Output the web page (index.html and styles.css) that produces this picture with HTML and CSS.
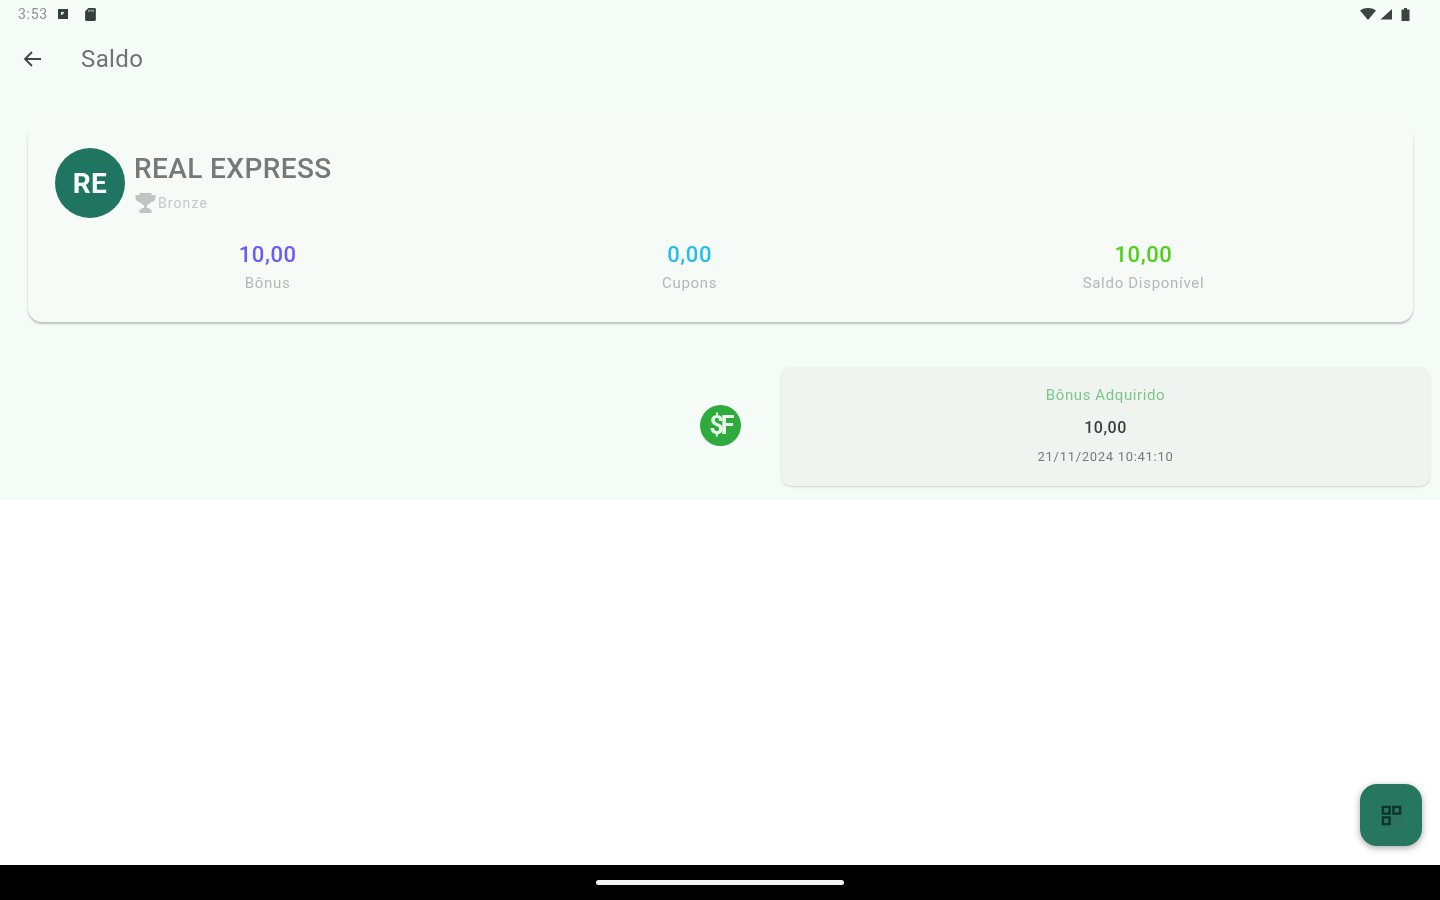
FILE: index.html
```html
<!DOCTYPE html>
<html lang="pt">
<head>
    <meta charset="UTF-8">
    <meta name="viewport" content="width=device-width, initial-scale=1.0">
    <title>Saldo</title>
    <link rel="stylesheet" href="styles.css">
</head>
<body>

<div class="screen">
    <div class="top-area">
        <!-- Status bar -->
        <div class="status-bar">
            <div class="status-left">
                <span class="clock">3:53</span>
                <svg class="status-icon" width="12" height="12" viewBox="0 0 12 12"><path fill="#33403b" d="M1 1h10v10H1z"/><path fill="#e8eeea" d="M4 4h3v1.500H5.500V7H4z"/></svg>
                <svg class="status-icon sd" width="13" height="15" viewBox="0 0 12 14"><path fill="#33403b" d="M4 1h6a1 1 0 0 1 1 1v10a1 1 0 0 1-1 1H2a1 1 0 0 1-1-1V4z"/><path fill="#c9d2cd" d="M4 2.500h1v2H4zM6 2.500h1v2H6zM8 2.500h1v2H8z"/></svg>
            </div>
            <div class="status-right">
                <svg width="16" height="12" viewBox="0 0 16 12"><path fill="#3a4540" d="M0 2.500C4.500-.8 11.500-.8 16 2.500L8 12z"/></svg>
                <svg class="signal" width="14" height="12" viewBox="0 0 13 12"><path fill="#3a4540" d="M12.500 1v10.500H1z"/></svg>
                <svg class="battery" width="9" height="13" viewBox="0 0 8 13"><path fill="#3a4540" d="M2.500 0h3v1.500H8V13H0V1.500h2.500z"/></svg>
            </div>
        </div>

        <!-- Toolbar -->
        <div class="toolbar">
            <svg class="back-icon" width="20" height="18" viewBox="0 0 20 18"><path fill="none" stroke="#3d4743" stroke-width="1.800" d="M19 9H3M10 2L3 9l7 7"/></svg>
            <span class="toolbar-title">Saldo</span>
        </div>

        <!-- Balance card -->
        <div class="card">
            <div class="card-head">
                <div class="avatar">RE</div>
                <div class="company">
                    <div class="company-name">REAL EXPRESS</div>
                    <div class="tier">
                        <svg width="23" height="22" viewBox="0 0 22 22"><path fill="#bfc6c2" d="M5 1h12v2h4v2.500c0 2.800-1.800 4.500-4.700 4.800-.8 1.500-2.100 2.500-3.800 2.900V16h2.500v1.500h2V21H5v-3.500h2V16h2.500v-2.800c-1.700-.4-3-1.400-3.800-2.900C2.800 10 1 8.300 1 5.500V3h4z"/></svg>
                        <span class="tier-name">Bronze</span>
                    </div>
                </div>
            </div>
            <div class="stats">
                <div class="stat">
                    <div class="stat-value bonus">10,00</div>
                    <div class="stat-label">Bônus</div>
                </div>
                <div class="stat">
                    <div class="stat-value cupons">0,00</div>
                    <div class="stat-label">Cupons</div>
                </div>
                <div class="stat">
                    <div class="stat-value saldo">10,00</div>
                    <div class="stat-label">Saldo Disponível</div>
                </div>
            </div>
        </div>

        <!-- Timeline entry -->
        <div class="entry">
            <div class="entry-side">
                <div class="entry-badge">$F</div>
            </div>
            <div class="entry-box">
                <div class="entry-title">Bônus Adquirido</div>
                <div class="entry-value">10,00</div>
                <div class="entry-date">21/11/2024 10:41:10</div>
            </div>
        </div>
    </div>

    <div class="white-area"></div>

    <div class="nav-bar">
        <div class="home-pill"></div>
    </div>

    <div class="fab">
        <svg width="21" height="21" viewBox="0 0 22 22">
            <path fill="none" stroke="#0f3328" stroke-width="2.500" d="M2 2h7v7H2zM13 2h7v7h-7zM2 13h7v7H2z"/>
            <path fill="#2f6f5b" d="M12 12h9v9h-9z"/>
        </svg>
    </div>
</div>

</body>
</html>
```

FILE: styles.css
```css
body {
    font-family: Roboto, "Liberation Sans", sans-serif;
    margin: 0;
    padding: 0;
}
.screen {
    height: 900px;
    display: flex;
    flex-direction: column;
    position: relative;
    overflow: hidden;
    background-color: #fff;
}
.top-area {
    height: 500px;
    background-color: #f5fbf7;
    filter: blur(0.6px);
}
.status-bar {
    height: 28px;
    display: flex;
    align-items: center;
    justify-content: space-between;
    padding: 0 30px 0 18px;
}
.status-left {
    display: flex;
    align-items: center;
}
.clock {
    font-size: 14px;
    letter-spacing: 0.7px;
    color: #8c9490;
    width: 39px;
}
.status-icon.sd {
    margin-left: 15px;
}
.status-right {
    display: flex;
    align-items: center;
}
.signal {
    margin-left: 3px;
}
.battery {
    margin-left: 8px;
}
.toolbar {
    height: 59px;
    padding: 1px 0 0 22px;
    display: flex;
    align-items: center;
}
.toolbar-title {
    font-size: 24px;
    letter-spacing: 0.4px;
    color: #6d7572;
    margin-left: 39px;
}
.card {
    margin: 36px 27px 0 28px;
    height: 198px;
    box-sizing: border-box;
    padding: 24px 27px 0;
    background-color: #f6fbf8;
    border-radius: 14px;
    box-shadow: 0 2px 2px rgba(60, 70, 65, 0.3);
}
.card-head {
    display: flex;
    gap: 9px;
}
.avatar {
    width: 70px;
    height: 70px;
    border-radius: 50%;
    background-color: #1f7560;
    color: #f4faf7;
    font-size: 28px;
    font-weight: 700;
    letter-spacing: 0.5px;
    display: flex;
    align-items: center;
    justify-content: center;
}
.company-name {
    font-size: 28px;
    font-weight: 500;
    letter-spacing: 0.4px;
    line-height: 42px;
    color: #757a78;
}
.tier {
    display: flex;
    align-items: center;
    margin-top: 1px;
    height: 24px;
}
.tier-name {
    font-size: 14px;
    letter-spacing: 1.1px;
    color: #c4c9c6;
    margin-left: 1px;
}
.stats {
    display: flex;
    justify-content: space-around;
    margin: 21px -1px 0 1px;
}
.stat {
    text-align: center;
}
.stat-value {
    font-size: 22px;
    font-weight: 500;
    letter-spacing: 0.6px;
    line-height: 32px;
}
.stat-value.bonus {
    color: #6a5cf5;
}
.stat-value.cupons {
    color: #25bdea;
}
.stat-value.saldo {
    color: #4fd119;
}
.stat-label {
    font-size: 15px;
    letter-spacing: 0.7px;
    line-height: 24px;
    color: #b4b9b6;
}
.entry {
    display: flex;
    margin: 45px 10px 0 0;
}
.entry-side {
    width: 781px;
    box-sizing: border-box;
    padding: 0 40px 2px 0;
    display: flex;
    align-items: center;
    justify-content: flex-end;
}
.entry-badge {
    width: 41px;
    height: 41px;
    border-radius: 50%;
    background-color: #2eaa3f;
    color: #e6f6e8;
    font-size: 25px;
    font-weight: 700;
    letter-spacing: -3px;
    display: flex;
    align-items: center;
    justify-content: center;
}
.entry-box {
    flex: 1;
    height: 119px;
    box-sizing: border-box;
    padding-top: 18px;
    background-color: #eff4f1;
    border-radius: 10px;
    box-shadow: 0 1px 2px rgba(60, 70, 65, 0.2);
    text-align: center;
}
.entry-title {
    font-size: 15px;
    letter-spacing: 0.6px;
    line-height: 20px;
    color: #7cc68c;
}
.entry-value {
    font-size: 16px;
    font-weight: 500;
    letter-spacing: 0.5px;
    line-height: 20px;
    margin-top: 13px;
    color: #3a3f3d;
}
.entry-date {
    font-size: 13px;
    letter-spacing: 0.7px;
    line-height: 20px;
    margin-top: 9px;
    color: #767b79;
}
.white-area {
    flex: 1;
}
.nav-bar {
    height: 35px;
    background-color: #000;
    display: flex;
    align-items: center;
    justify-content: center;
}
.home-pill {
    width: 248px;
    height: 5px;
    border-radius: 3px;
    background-color: #f2f2f2;
}
.fab {
    position: absolute;
    left: 1360px;
    top: 784px;
    width: 62px;
    height: 62px;
    border-radius: 17px;
    background-color: #27765f;
    box-shadow: 0 2px 7px rgba(0, 0, 0, 0.35);
    display: flex;
    align-items: center;
    justify-content: center;
}
```
